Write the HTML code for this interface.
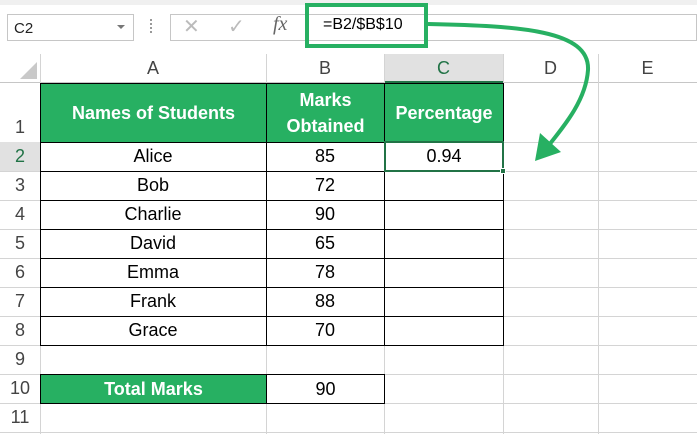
<!DOCTYPE html><html><head><meta charset="utf-8"><style>
body{margin:0;width:697px;height:434px;overflow:hidden;background:#fff;font-family:"Liberation Sans",Calibri,sans-serif;position:relative}
.a{position:absolute;box-sizing:border-box}
.c{position:absolute;box-sizing:border-box;display:flex;align-items:center;justify-content:center;font-size:18px;color:#000}
.g{background:#27b062;color:#fff;font-weight:bold}
</style></head><body>
<div class="a" style="left:0;top:0;width:697px;height:5px;background:#f0f0f0"></div>
<div class="a" style="left:7px;top:14px;width:127px;height:27px;border:1px solid #c6c6c6;font-size:15px;padding:5px 6px;color:#222">C2</div>
<div class="a" style="left:117px;top:25px;width:0;height:0;border-left:4px solid transparent;border-right:4px solid transparent;border-top:4px solid #777"></div>
<div class="a" style="left:150px;top:19px;width:2px;height:14px;border-left:2px dotted #999"></div>
<div class="a" style="left:170px;top:14px;width:527px;height:27px;border:1px solid #c6c6c6"></div>
<div class="a" style="left:183px;top:14px;font-size:20px;color:#bbb">✕</div>
<div class="a" style="left:228px;top:14px;font-size:20px;color:#bbb">✓</div>
<div class="a" style="left:273px;top:13px;font-size:20px;color:#666;font-family:'Liberation Serif',serif;font-style:italic">fx</div>
<div class="a" style="left:305px;top:3px;width:123px;height:45px;border:4px solid #27b062"></div>
<div class="a" style="left:323px;top:16px;font-size:16px;color:#000">=B2/$B$10</div>
<div class="a" style="left:0;top:54px;width:697px;height:29px;background:#fff;border-bottom:1px solid #c6c6c6"></div>
<div class="a" style="left:384px;top:54px;width:119px;height:29px;background:#e1e1e1;border-bottom:2px solid #217346"></div>
<div class="a" style="left:20px;top:62px;width:0;height:0;border-left:17px solid transparent;border-bottom:17px solid #c9c9c9"></div>
<div class="c" style="left:40px;top:54px;width:226px;height:29px;color:#444">A</div>
<div class="c" style="left:266px;top:54px;width:118px;height:29px;color:#444">B</div>
<div class="c" style="left:384px;top:54px;width:119px;height:29px;color:#217346">C</div>
<div class="c" style="left:503px;top:54px;width:95px;height:29px;color:#444">D</div>
<div class="c" style="left:598px;top:54px;width:99px;height:29px;color:#444">E</div>
<svg class="a" style="left:0;top:54px" width="697" height="380">
<g stroke="#d4d4d4" stroke-width="1">
<line x1="40.5" y1="0" x2="40.5" y2="380"/><line x1="266.5" y1="0" x2="266.5" y2="380"/><line x1="384.5" y1="0" x2="384.5" y2="380"/><line x1="503.5" y1="0" x2="503.5" y2="380"/><line x1="598.5" y1="0" x2="598.5" y2="380"/>
<line x1="0" y1="88.5" x2="697" y2="88.5"/><line x1="0" y1="117.5" x2="697" y2="117.5"/><line x1="0" y1="146.5" x2="697" y2="146.5"/><line x1="0" y1="175.5" x2="697" y2="175.5"/><line x1="0" y1="204.5" x2="697" y2="204.5"/><line x1="0" y1="233.5" x2="697" y2="233.5"/><line x1="0" y1="262.5" x2="697" y2="262.5"/><line x1="0" y1="291.5" x2="697" y2="291.5"/><line x1="0" y1="320.5" x2="697" y2="320.5"/><line x1="0" y1="349.5" x2="697" y2="349.5"/><line x1="0" y1="378.5" x2="697" y2="378.5"/>
</g></svg>
<div class="c" style="left:0;top:113px;width:40px;height:29px;color:#444">1</div>
<div class="c" style="left:0;top:142px;width:40px;height:29px;color:#217346;background:#e1e1e1">2</div>
<div class="c" style="left:0;top:171px;width:40px;height:29px;color:#444">3</div>
<div class="c" style="left:0;top:200px;width:40px;height:29px;color:#444">4</div>
<div class="c" style="left:0;top:229px;width:40px;height:29px;color:#444">5</div>
<div class="c" style="left:0;top:258px;width:40px;height:29px;color:#444">6</div>
<div class="c" style="left:0;top:287px;width:40px;height:29px;color:#444">7</div>
<div class="c" style="left:0;top:316px;width:40px;height:29px;color:#444">8</div>
<div class="c" style="left:0;top:345px;width:40px;height:29px;color:#444">9</div>
<div class="c" style="left:0;top:374px;width:40px;height:29px;color:#444">10</div>
<div class="c" style="left:0;top:403px;width:40px;height:29px;color:#444">11</div>
<div class="c g" style="left:40px;top:83px;width:227px;height:60px;border:1px solid #000">Names of Students</div>
<div class="c g" style="left:266px;top:83px;width:119px;height:60px;border:1px solid #000;line-height:26px;text-align:center">Marks<br>Obtained</div>
<div class="c g" style="left:384px;top:83px;width:120px;height:60px;border:1px solid #000">Percentage</div>
<div class="a" style="left:40px;top:142px;width:345px;height:204px;border:1px solid #000"></div>
<div class="a" style="left:384px;top:142px;width:120px;height:204px;border:1px solid #000"></div>
<div class="a" style="left:266px;top:142px;width:1px;height:204px;background:#000"></div>
<svg class="a" style="left:40px;top:142px" width="464" height="204"><g stroke="#000"><line x1="0" y1="29.5" x2="464" y2="29.5"/><line x1="0" y1="58.5" x2="464" y2="58.5"/><line x1="0" y1="87.5" x2="464" y2="87.5"/><line x1="0" y1="116.5" x2="464" y2="116.5"/><line x1="0" y1="145.5" x2="464" y2="145.5"/><line x1="0" y1="174.5" x2="464" y2="174.5"/></g></svg>
<div class="c" style="left:40px;top:142px;width:226px;height:29px">Alice</div><div class="c" style="left:266px;top:142px;width:118px;height:29px">85</div>
<div class="c" style="left:40px;top:171px;width:226px;height:29px">Bob</div><div class="c" style="left:266px;top:171px;width:118px;height:29px">72</div>
<div class="c" style="left:40px;top:200px;width:226px;height:29px">Charlie</div><div class="c" style="left:266px;top:200px;width:118px;height:29px">90</div>
<div class="c" style="left:40px;top:229px;width:226px;height:29px">David</div><div class="c" style="left:266px;top:229px;width:118px;height:29px">65</div>
<div class="c" style="left:40px;top:258px;width:226px;height:29px">Emma</div><div class="c" style="left:266px;top:258px;width:118px;height:29px">78</div>
<div class="c" style="left:40px;top:287px;width:226px;height:29px">Frank</div><div class="c" style="left:266px;top:287px;width:118px;height:29px">88</div>
<div class="c" style="left:40px;top:316px;width:226px;height:29px">Grace</div><div class="c" style="left:266px;top:316px;width:118px;height:29px">70</div>
<div class="c" style="left:384px;top:141px;width:120px;height:31px;border:2px solid #217346">0.94</div>
<div class="a" style="left:500px;top:168px;width:6px;height:6px;background:#217346;border:1px solid #fff"></div>
<div class="c g" style="left:40px;top:374px;width:227px;height:30px;border:1px solid #000">Total Marks</div>
<div class="c" style="left:266px;top:374px;width:119px;height:30px;border:1px solid #000">90</div>
<svg class="a" style="left:0;top:0" width="697" height="434">
<path d="M428 24 C520 26 590 30 588 70 C586 100 565 125 545 150" fill="none" stroke="#27b062" stroke-width="4"/>
<polygon points="535,161 540,133 561,152" fill="#27b062"/>
</svg>
</body></html>
